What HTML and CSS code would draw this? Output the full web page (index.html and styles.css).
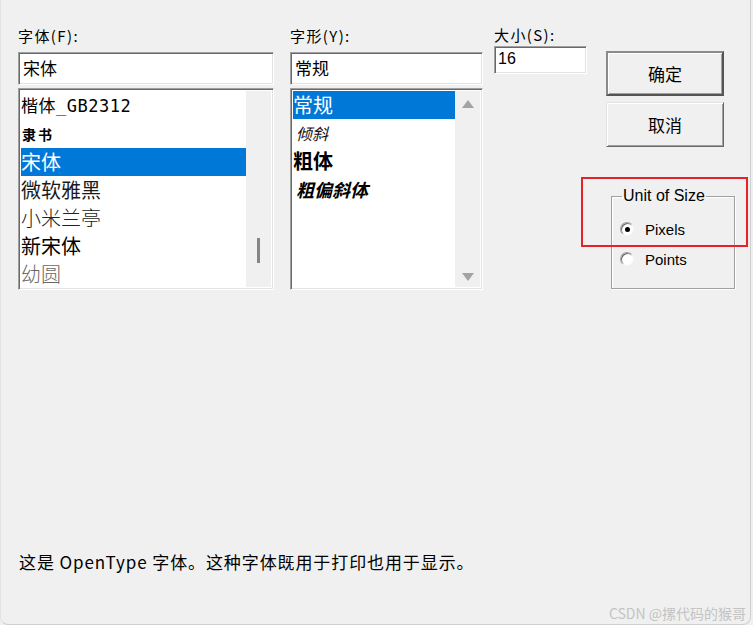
FILE: index.html
```html
<!DOCTYPE html>
<html lang="zh-CN">
<head>
<meta charset="utf-8">
<title>字体</title>
<link rel="stylesheet" href="styles.css">
</head>
<body>
<div class="dialog">
  <div class="top">
    <div class="col col-font">
      <div class="label">字体(F):</div>
      <div class="edit">宋体</div>
      <div class="list">
        <div class="items">
          <div class="item f-kai">楷体_GB2312</div>
          <div class="item f-li">隶书</div>
          <div class="item sel">宋体</div>
          <div class="item f-yahei">微软雅黑</div>
          <div class="item f-lanting">小米兰亭</div>
          <div class="item">新宋体</div>
          <div class="item f-youyuan">幼圆</div>
        </div>
        <div class="vscroll">
          <div class="thumb"></div>
        </div>
      </div>
    </div>
    <div class="col col-style">
      <div class="label">字形(Y):</div>
      <div class="edit">常规</div>
      <div class="list">
        <div class="items">
          <div class="item sel">常规</div>
          <div class="item s-italic">倾斜</div>
          <div class="item s-bold">粗体</div>
          <div class="item s-bolditalic">粗偏斜体</div>
        </div>
        <div class="vscroll arrows">
          <div class="arrow up"></div>
          <div class="arrow down"></div>
        </div>
      </div>
    </div>
    <div class="col col-size">
      <div class="label">大小(S):</div>
      <div class="edit size-edit">16</div>
    </div>
    <div class="col col-buttons">
      <button class="btn default">确定</button>
      <button class="btn">取消</button>
      <fieldset class="group">
        <legend>Unit of Size</legend>
        <div class="radio-row"><span class="radio checked"></span><span>Pixels</span></div>
        <div class="radio-row"><span class="radio"></span><span>Points</span></div>
      </fieldset>
    </div>
  </div>
  <p class="desc">这是 OpenType 字体。这种字体既用于打印也用于显示。</p>
  <div class="watermark">CSDN @摞代码的猴哥</div>
  <div class="highlight"></div>
</div>
</body>
</html>
```

FILE: styles.css
```css
html, body {
  margin: 0;
  padding: 0;
  background: #f0f0f0;
}

.dialog {
  position: relative;
  width: 751px;
  height: 625px;
  box-sizing: border-box;
  background: #f0f0f0;
  border-right: 1px solid #cfcfcf;
  border-bottom: 1px solid #cfcfcf;
  border-left: 1px solid #e2e2e2;
  border-bottom-left-radius: 8px;
  border-bottom-right-radius: 8px;
  padding: 27px 0 0 17px;
  font-family: "Noto Sans CJK SC", "Liberation Sans", sans-serif;
  color: #000;
  display: flex;
  flex-direction: column;
}

.top {
  display: flex;
  align-items: flex-start;
}

.col {
  display: flex;
  flex-direction: column;
}

.col-font { width: 256px; }
.col-style { width: 193px; margin-left: 16px; }
.col-size { width: 93px; margin-left: 11px; margin-top: -1px; }
.col-buttons { width: 130px; margin-left: 19px; padding-top: 24px; }

.label {
  font-size: 15px;
  line-height: 18px;
  height: 18px;
  letter-spacing: 1.4px;
  white-space: nowrap;
}

.edit {
  margin-top: 7px;
  height: 33px;
  box-sizing: border-box;
  background: #fff;
  border: 1px solid;
  border-color: #a0a0a0 #ffffff #ffffff #a0a0a0;
  box-shadow: inset 1px 1px 0 #696969, inset -1px -1px 0 #e3e3e3;
  font-size: 17px;
  line-height: 29px;
  padding-left: 4px;
}

.size-edit {
  margin-top: 2px;
  height: 28px;
  line-height: 24px;
  padding-left: 3px;
  font-family: "Liberation Sans", sans-serif;
  font-size: 16px;
}

.list {
  margin-top: 3px;
  height: 202px;
  box-sizing: border-box;
  background: #fff;
  border: 1px solid;
  border-color: #a0a0a0 #ffffff #ffffff #a0a0a0;
  box-shadow: inset 1px 1px 0 #696969, inset -1px -1px 0 #e3e3e3;
  padding: 2px 2px 2px 2px;
  display: flex;
}

.items {
  flex: 1;
  display: flex;
  flex-direction: column;
  overflow: hidden;
}

.item {
  height: 28px;
  line-height: 28px;
  font-size: 20px;
  white-space: nowrap;
  padding-left: 0;
}

.col-font .items { padding-top: 1px; }

.item.sel {
  background: #0078d7;
  color: #fff;
}

.f-kai {
  font-family: "DejaVu Sans Mono", "Noto Sans CJK SC", monospace;
  font-size: 17px;
  letter-spacing: 0.5px;
}

.f-li {
  font-size: 14px;
  font-weight: 700;
  letter-spacing: 2px;
  padding-left: 1px;
}

.f-yahei { color: #1a1a1a; }
.f-lanting { color: #222; font-weight: 300; }
.f-youyuan { color: #666; font-weight: 300; }

.s-italic {
  font-size: 16px;
  font-style: italic;
  padding-left: 3px;
  color: #111;
}

.s-bold { font-weight: 700; }

.s-bolditalic {
  font-size: 18px;
  font-weight: 700;
  font-style: italic;
  padding-left: 3px;
}

.vscroll {
  width: 25px;
  background: #f0f0f0;
  position: relative;
  display: flex;
  flex-direction: column;
  align-items: center;
}

.col-font .thumb {
  width: 3px;
  height: 25px;
  background: #858585;
  margin-top: 147px;
  margin-left: 0;
}

.vscroll.arrows {
  justify-content: space-between;
  padding: 9px 0 6px;
}

.arrow {
  width: 0;
  height: 0;
  border-left: 6.5px solid transparent;
  border-right: 6.5px solid transparent;
}

.arrow.up { border-bottom: 8px solid #a3a3a3; }
.arrow.down { border-top: 8px solid #a3a3a3; }

.btn {
  width: 118px;
  height: 45px;
  box-sizing: border-box;
  background: #f0f0f0;
  border: 1px solid;
  border-color: #e3e3e3 #696969 #696969 #e3e3e3;
  box-shadow: inset 1px 1px 0 #ffffff, inset -1px -1px 0 #a0a0a0;
  font-family: "Noto Sans CJK SC", sans-serif;
  font-size: 17px;
  color: #000;
  padding: 0;
  margin: 0;
}

.btn + .btn { margin-top: 6px; }

.btn.default {
  border: 2px solid #646464;
  border-color: #8a8a8a #555 #555 #8a8a8a;
  box-shadow: inset 1px 1px 0 #ffffff, inset -1px -1px 0 #a0a0a0;
}

.group {
  margin: 40px 0 0 5px;
  width: 124px;
  height: 102px;
  box-sizing: border-box;
  border: 1px solid #a0a0a0;
  box-shadow: inset 1px 1px 0 #fff, 1px 1px 0 #fff;
  padding: 9px 0 0 8px;
  font-family: "Liberation Sans", sans-serif;
  font-size: 15px;
}

.group legend {
  font-size: 16px;
  line-height: 18px;
  padding: 0 1px;
  margin-left: 2px;
}

.radio-row {
  display: flex;
  align-items: center;
  height: 30px;
  gap: 11px;
}

.radio {
  width: 14px;
  height: 14px;
  box-sizing: border-box;
  border-radius: 50%;
  background: #fff;
  border: 1px solid;
  border-color: #a0a0a0 #f4f4f4 #f4f4f4 #a0a0a0;
  box-shadow: inset 1px 1px 0 #696969;
  position: relative;
}

.radio.checked::after {
  content: "";
  position: absolute;
  left: 3.5px;
  top: 3.5px;
  width: 5px;
  height: 5px;
  border-radius: 50%;
  background: #000;
}

.desc {
  margin: 261px 0 0 1px;
  font-size: 17px;
  line-height: 22px;
  letter-spacing: 0.9px;
}

.watermark {
  margin-top: auto;
  margin-bottom: 1px;
  align-self: flex-end;
  margin-right: 4px;
  font-size: 14px;
  color: #c3c3c3;
  line-height: 20px;
}

.highlight {
  position: absolute;
  left: 580px;
  top: 177px;
  width: 167px;
  height: 70px;
  box-sizing: border-box;
  border: 2px solid #e5222c;
}
```
